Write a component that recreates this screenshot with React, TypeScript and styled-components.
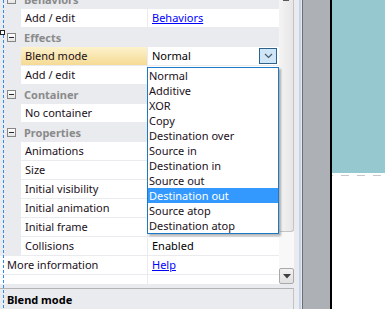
import styled, { createGlobalStyle } from "styled-components";

const GlobalStyle = createGlobalStyle`
  html, body {
    margin: 0;
    padding: 0;
  }
  body {
    font-family: "Noto Sans", "Segoe UI", sans-serif;
    font-size: 11px;
    color: #1a0f1a;
    background: #ffffff;
  }
`;

const Screen = styled.div`
  display: flex;
  width: 385px;
  height: 309px;
  overflow: hidden;
`;

const Pane = styled.div`
  position: relative;
  flex: none;
  width: 299px;
  display: flex;
  flex-direction: column;
  background: #e9ebef;
`;

const Body = styled.div`
  display: flex;
  height: 284px;
  overflow: hidden;
`;

const Grid = styled.div`
  position: relative;
  width: 279px;
  flex: none;
`;

const List = styled.div`
  display: flex;
  flex-direction: column;
  margin-top: -10px;
`;

const Row = styled.div`
  display: flex;
  height: 18px;
  margin-bottom: 1px;
  gap: 1px;
`;

const Label = styled.div<{ $top?: boolean; $active?: boolean }>`
  width: ${(p) => (p.$top ? "140px" : "122px")};
  margin-left: ${(p) => (p.$top ? "0" : "21px")};
  padding-left: ${(p) => (p.$top ? "7px" : "4px")};
  line-height: 18px;
  white-space: nowrap;
  background: ${(p) =>
    p.$active ? "linear-gradient(#fdf2cc, #f5da94)" : "#ffffff"};
`;

const Value = styled.div`
  position: relative;
  flex: 1;
  padding-left: 4px;
  line-height: 18px;
  white-space: nowrap;
  background: #ffffff;
  color: #000;
`;

const Link = styled.a`
  color: #0000ff;
  text-decoration: underline;
`;

const GroupRow = styled.div`
  display: flex;
  align-items: center;
  height: 18px;
  margin-bottom: 1px;
  font-weight: bold;
  color: #8a8a8a;
`;

const Toggle = styled.span`
  position: relative;
  box-sizing: border-box;
  width: 9px;
  height: 9px;
  margin: 0 8px 0 7px;
  border: 1px solid #858585;
  background: linear-gradient(#ffffff, #e4e4e4);

  &::after {
    content: "";
    position: absolute;
    left: 1px;
    top: 3px;
    width: 5px;
    height: 1px;
    background: #2a2a2a;
  }
`;

const DropButton = styled.div`
  position: absolute;
  right: 2px;
  top: 1px;
  box-sizing: border-box;
  width: 18px;
  height: 16px;
  border: 1px solid #2c628b;
  background: #cfe6f8;
  display: flex;
  align-items: center;
  justify-content: center;
`;

const Popup = styled.div`
  position: absolute;
  z-index: 10;
  left: -1px;
  top: 20px;
  box-sizing: border-box;
  width: 132px;
  border: 1px solid #1c78c8;
  background: #ffffff;
  box-shadow: 2px 2px 2px rgba(0, 0, 0, 0.3);
  color: #1a0f1a;
`;

const Option = styled.div<{ $selected?: boolean }>`
  height: 15px;
  line-height: 15px;
  padding-left: 1px;
  white-space: nowrap;
  background: ${(p) => (p.$selected ? "#3399ff" : "transparent")};
  color: ${(p) => (p.$selected ? "#ffffff" : "inherit")};
`;

const Scrollbar = styled.div`
  width: 15px;
  flex: none;
  display: flex;
  flex-direction: column;
  background: #f8f8f8;
`;

const Thumb = styled.div`
  position: relative;
  box-sizing: border-box;
  height: 232px;
  border-right: 1px solid #c4c4c4;
  border-bottom: 1px solid #c4c4c4;
  border-radius: 0 0 3px 3px;
  background: linear-gradient(to right, #f4f4f4, #e6e6e6);

  &::before {
    content: "";
    position: absolute;
    left: 4px;
    top: 0;
    width: 6px;
    height: 1px;
    background: #5a5a5a;
  }
`;

const Track = styled.div`
  flex: 1;
`;

const DownButton = styled.div`
  box-sizing: border-box;
  height: 16px;
  border: 1px solid #a9a9a9;
  border-radius: 2px;
  background: linear-gradient(#f2f2f2, #e1e1e1);
  display: flex;
  align-items: center;
  justify-content: center;
`;

const Description = styled.div`
  box-sizing: border-box;
  width: 294px;
  height: 21px;
  margin-top: 4px;
  padding-left: 7px;
  border-top: 1px solid #b3b3b3;
  border-right: 1px solid #c3c3c3;
  line-height: 22px;
  font-weight: bold;
  color: #000;
`;

const Selection = styled.div`
  position: absolute;
  left: 3px;
  top: 0;
  bottom: 0;
  width: 1px;
  background: repeating-linear-gradient(
    to bottom,
    #2f8cea 0 3px,
    transparent 3px 5px
  );
  z-index: 5;
`;

const Handle = styled.div`
  position: absolute;
  left: 0;
  top: 30px;
  box-sizing: border-box;
  width: 5px;
  height: 5px;
  border: 1px solid #222;
  background: #fff;
  z-index: 6;
`;

const Splitter = styled.div`
  flex: none;
  width: 1px;
  border-left: 2px solid #c6d3eb;
  border-right: 1px solid #6e6e6e;
  background: #e4e9f1;
`;

const Gutter = styled.div`
  flex: none;
  width: 27px;
  background: #adb0b5;
`;

const Canvas = styled.div`
  flex: 1;
  display: flex;
  flex-direction: column;
  border-left: 2px solid #000;
  background: #ffffff;
`;

const Layer = styled.div`
  height: 173px;
  background: #96c8d0;
`;

const Margin = styled.div`
  height: 1px;
  margin-top: 2px;
  background: repeating-linear-gradient(
    to right,
    #c6c6c6 0 1px,
    transparent 1px 9px,
    #c6c6c6 9px 16px
  );
`;

const modes = [
  "Normal",
  "Additive",
  "XOR",
  "Copy",
  "Destination over",
  "Source in",
  "Destination in",
  "Source out",
  "Destination out",
  "Source atop",
  "Destination atop",
];

type Item =
  | { kind: "group"; name: string }
  | { kind: "prop"; name: string; value?: string; link?: boolean; top?: boolean };

const items: Item[] = [
  { kind: "group", name: "Behaviors" },
  { kind: "prop", name: "Add / edit", value: "Behaviors", link: true },
  { kind: "group", name: "Effects" },
  { kind: "prop", name: "Blend mode", value: "Normal" },
  { kind: "prop", name: "Add / edit" },
  { kind: "group", name: "Container" },
  { kind: "prop", name: "No container" },
  { kind: "group", name: "Properties" },
  { kind: "prop", name: "Animations" },
  { kind: "prop", name: "Size" },
  { kind: "prop", name: "Initial visibility" },
  { kind: "prop", name: "Initial animation" },
  { kind: "prop", name: "Initial frame" },
  { kind: "prop", name: "Collisions", value: "Enabled" },
  { kind: "prop", name: "More information", value: "Help", link: true, top: true },
  { kind: "prop", name: "", top: true },
];

const Chevron = () => (
  <svg width="9" height="6" viewBox="0 0 9 6">
    <path d="M1 1 L4.5 4.5 L8 1" fill="none" stroke="#4a5a6a" strokeWidth="1.2" />
  </svg>
);

const DownArrow = () => (
  <svg width="8" height="5" viewBox="0 0 8 5">
    <path d="M0 0 H8 L4 4.5 Z" fill="#404040" />
  </svg>
);

export default function App() {
  return (
    <>
      <GlobalStyle />
      <Screen>
        <Pane>
          <Selection />
          <Handle />
          <Body>
            <Grid>
              <List>
                {items.map((it, i) =>
                  it.kind === "group" ? (
                    <GroupRow key={i}>
                      <Toggle />
                      {it.name}
                    </GroupRow>
                  ) : (
                    <Row key={i}>
                      <Label $top={it.top} $active={it.name === "Blend mode"}>
                        {it.name}
                      </Label>
                      <Value>
                        {it.link ? <Link>{it.value}</Link> : it.value}
                        {it.name === "Blend mode" && (
                          <>
                            <DropButton>
                              <Chevron />
                            </DropButton>
                            <Popup>
                              {modes.map((m) => (
                                <Option key={m} $selected={m === "Destination out"}>
                                  {m}
                                </Option>
                              ))}
                            </Popup>
                          </>
                        )}
                      </Value>
                    </Row>
                  )
                )}
              </List>
            </Grid>
            <Scrollbar>
              <Thumb />
              <Track />
              <DownButton>
                <DownArrow />
              </DownButton>
            </Scrollbar>
          </Body>
          <Description>Blend mode</Description>
        </Pane>
        <Splitter />
        <Gutter />
        <Canvas>
          <Layer />
          <Margin />
        </Canvas>
      </Screen>
    </>
  );
}
